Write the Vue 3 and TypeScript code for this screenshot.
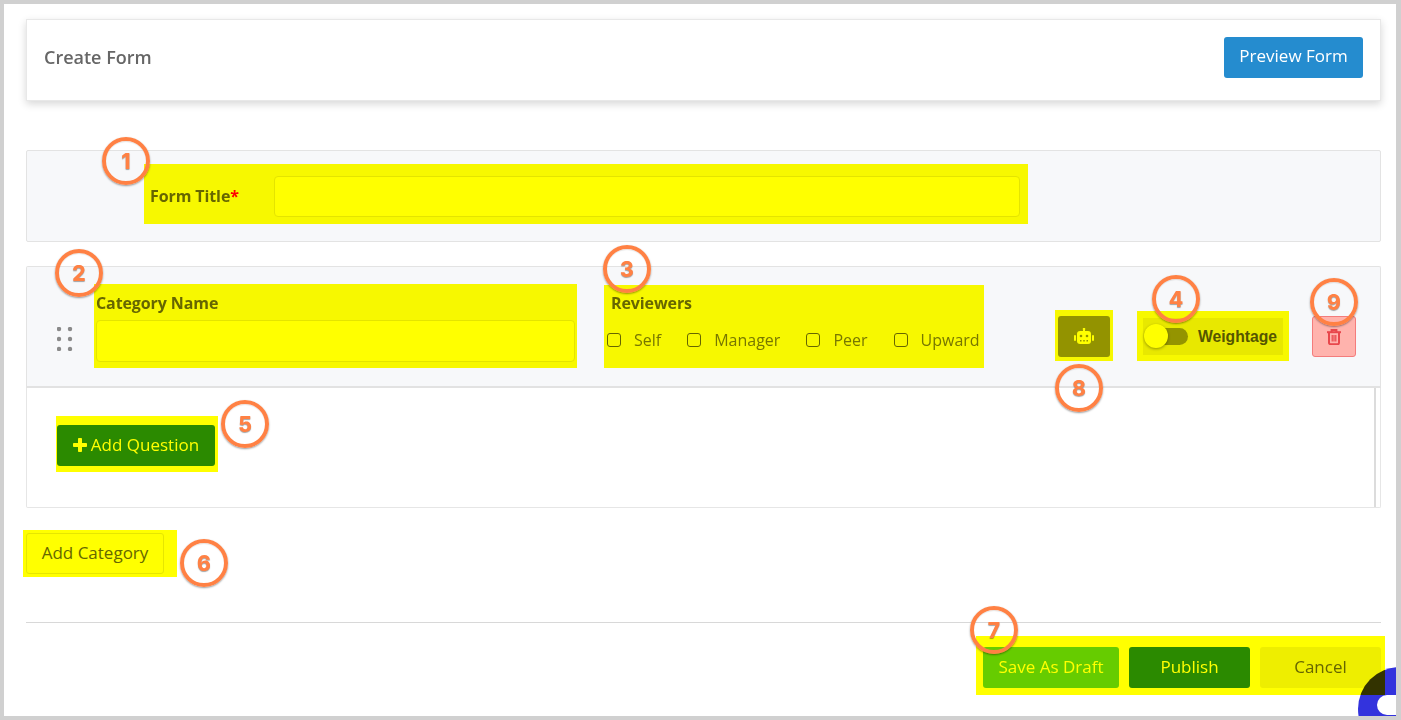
<script setup lang="ts">
interface Marker { n: number; x: number; y: number }
const markers: Marker[] = [
  { n: 1, x: 126, y: 161 },
  { n: 2, x: 79, y: 273 },
  { n: 3, x: 627, y: 269 },
  { n: 4, x: 1176, y: 299 },
  { n: 5, x: 245, y: 424 },
  { n: 6, x: 204, y: 563 },
  { n: 7, x: 994, y: 630 },
  { n: 8, x: 1079, y: 388 },
  { n: 9, x: 1334, y: 302 },
]
const reviewers = ['Self', 'Manager', 'Peer', 'Upward']
</script>

<template>
  <div class="frame">
    <header class="top-card">
      <h1>Create Form</h1>
      <button class="btn preview">Preview Form</button>
    </header>

    <section class="title-card">
      <div class="hl hl-title">
        <label class="title-label">Form Title<span class="req">*</span></label>
        <input class="field title-input" type="text" />
      </div>
    </section>

    <section class="cat-head">
      <svg class="grip" width="16" height="24" viewBox="0 0 16 24">
        <circle v-for="c in [[2,2],[13,2],[2,12],[13,12],[2,22],[13,22]]" :key="c.join()" :cx="c[0]" :cy="c[1]" r="2.2" fill="#8a8a8a" />
      </svg>
      <div class="hl hl-name">
        <label class="lab">Category Name</label>
        <input class="field name-input" type="text" />
      </div>
      <div class="hl hl-rev">
        <label class="lab rev-lab">Reviewers</label>
        <div class="checks">
          <label v-for="r in reviewers" :key="r" class="check"><span class="box"></span>{{ r }}</label>
        </div>
      </div>
      <div class="hl hl-robot">
        <button class="robot">
          <svg width="20" height="18" viewBox="0 0 20 18" fill="#fff">
            <rect x="9" y="0" width="2" height="3" />
            <circle cx="10" cy="1" r="1.3" />
            <rect x="3" y="3" width="14" height="13" rx="3" />
            <rect x="0" y="7" width="2" height="6" rx="1" />
            <rect x="18" y="7" width="2" height="6" rx="1" />
            <circle cx="7" cy="8" r="1.3" fill="#939393" />
            <circle cx="13" cy="8" r="1.3" fill="#939393" />
            <rect x="6" y="12" width="1.500" height="1.500" fill="#939393" />
            <rect x="9.250" y="12" width="1.500" height="1.500" fill="#939393" />
            <rect x="12.500" y="12" width="1.500" height="1.500" fill="#939393" />
          </svg>
        </button>
      </div>
      <div class="hl hl-weight">
        <div class="weight">
          <span class="track"><span class="knob"></span></span>
          <span class="weight-text">Weightage</span>
        </div>
      </div>
      <button class="trash">
        <svg width="14" height="16" viewBox="0 0 14 16" fill="none" stroke="#e8474c" stroke-width="2">
          <path d="M0 3.200h14" />
          <path d="M4.600 3V1h4.800v2" />
          <path d="M2 3.200v10.600a1.400 1.400 0 0 0 1.400 1.400h7.200a1.400 1.400 0 0 0 1.400-1.400V3.200" />
          <path d="M5.200 6v6.500M7 6v6.500M8.800 6v6.500" stroke-width="1.200" />
        </svg>
      </button>
    </section>

    <section class="cat-body">
      <div class="hl hl-add">
        <button class="btn add-q">
          <svg width="14" height="14" viewBox="0 0 14 14" fill="#fff"><path d="M5 .8C5 .4 5.400 0 5.800 0h2.400c.4 0 .8.4.8.8V5h4.200c.4 0 .8.4.8.8v2.400c0 .4-.4.8-.8.8H9v4.200c0 .4-.4.8-.8.8H5.800c-.4 0-.8-.4-.8-.8V9H.8C.4 9 0 8.600 0 8.200V5.800C0 5.400.4 5 .8 5H5z" /></svg>
          Add Question
        </button>
      </div>
    </section>

    <div class="add-cat-row">
      <div class="hl hl-cat"><button class="btn add-cat">Add Category</button></div>
    </div>

    <hr class="rule" />

    <footer class="foot">
      <div class="hl-foot">
        <button class="btn draft">Save As Draft</button>
        <button class="btn publish">Publish</button>
        <button class="btn cancel">Cancel</button>
      </div>
    </footer>

    <div class="widget"><span class="pill"></span></div>
    <div class="foot-hl"></div>

    <span
      v-for="m in markers"
      :key="m.n"
      class="marker"
      :style="{ left: m.x - 4 + 'px', top: m.y - 4 + 'px' }"
    >{{ m.n }}</span>
  </div>
</template>

<style>
html, body { margin: 0; background: #fff; }
</style>

<style scoped>
.frame {
  position: relative;
  box-sizing: border-box;
  width: 1401px;
  height: 720px;
  overflow: hidden;
  background: #fff;
  border: 4px solid #d0d0d0;
  border-right-width: 5px;
  padding: 15px 15px 0 22px;
  font-family: "Open Sans", "Noto Sans", sans-serif;
  color: #666;
}
.hl { position: relative; }
.hl::after, .foot-hl {
  content: "";
  position: absolute;
  background: #ffff00;
  mix-blend-mode: multiply;
  pointer-events: none;
}
.foot-hl { left: 972px; top: 632px; width: 409px; height: 59px; }
.top-card {
  box-sizing: border-box;
  height: 82px;
  background: #fff;
  border: 1px solid #e8e8e8;
  box-shadow: 0 3px 8px rgba(0, 0, 0, .16);
  display: flex;
  align-items: center;
  justify-content: space-between;
  padding: 0 17px 6px 17px;
}
h1 { margin: 0 0 1px; font-size: 18px; font-weight: 600; color: #666; line-height: 24px; }
.btn {
  box-sizing: border-box;
  height: 41px;
  border: 0;
  border-radius: 3px;
  font: 400 17px/22px "Open Sans", "Noto Sans", sans-serif;
  color: #fff;
  padding: 0 0 2px;
}
.preview { width: 139px; background: #258ccf; }
.title-card {
  box-sizing: border-box;
  height: 92px;
  margin-top: 49px;
  background: #f7f8fa;
  border: 1px solid #e3e3e3;
  border-radius: 2px;
  padding: 25px 0 0 123px;
}
.hl-title { display: flex; align-items: center; width: 870px; }
.hl-title::after { inset: -12px -8px -7px -6px; }
.title-label { width: 124px; font-size: 16px; font-weight: 700; color: #666; padding-bottom: 1px; letter-spacing: -.1px; }
.req { color: #ff0000; }
.field {
  box-sizing: border-box;
  display: block;
  height: 41px;
  background: #fff;
  border: 1px solid #e4e4e4;
  border-radius: 4px;
  padding: 0 10px;
  outline: none;
}
.title-input { width: 746px; }
.cat-head {
  box-sizing: border-box;
  height: 122px;
  margin-top: 24px;
  background: #f7f8fa;
  border: 1px solid #e3e3e3;
  border-bottom: 2px solid #e2e2e2;
  border-radius: 2px 2px 0 0;
  display: flex;
  align-items: flex-start;
  position: relative;
}
.grip { margin: 60px 0 0 30px; flex: none; }
.hl-name { width: 479px; margin: 26px 0 0 23px; }
.hl-name::after { inset: -9px -2px -6px -2px; }
.lab { display: block; font-size: 16px; font-weight: 700; line-height: 20px; color: #666; letter-spacing: -.1px; }
.name-input { width: 479px; height: 42px; margin-top: 7px; }
.hl-rev { margin: 26px 0 0 32px; width: 374px; }
.hl-rev::after { inset: -8px -3px -15px -3px; }
.rev-lab { padding-left: 4px; }
.checks { display: flex; margin-top: 13px; height: 27px; align-items: center; }
.check { display: flex; align-items: center; font-size: 16px; color: #777; margin-right: 26px; white-space: nowrap; }
.check:last-child { margin-right: 0; }
.box {
  box-sizing: border-box;
  width: 14px;
  height: 14px;
  border: 1.500px solid #666;
  border-radius: 3px;
  margin-right: 13px;
}
.hl-robot { margin: 49px 0 0 77px; }
.hl-robot::after { inset: -6px -3px -4px -3px; }
.robot {
  box-sizing: border-box;
  width: 52px;
  height: 41px;
  display: flex;
  align-items: center;
  justify-content: center;
  background: #939393;
  border: 0;
  border-radius: 3px;
}
.hl-weight { margin: 51px 0 0 33px; }
.hl-weight::after { inset: -7px -6px -6px -6px; }
.weight {
  box-sizing: border-box;
  display: flex;
  align-items: center;
  width: 140px;
  height: 37px;
  background: #e8e8e8;
  padding-left: 3px;
}
.track {
  position: relative;
  display: block;
  width: 42px;
  height: 17px;
  border-radius: 9px;
  background: #949494;
}
.knob {
  position: absolute;
  left: -2px;
  top: -4px;
  width: 24px;
  height: 24px;
  border-radius: 50%;
  background: #fff;
  box-shadow: 0 1px 3px rgba(0, 0, 0, .35);
}
.weight-text {
  margin-left: 10px;
  font: 700 15.700px "Liberation Sans", Arial, sans-serif;
  color: #555;
}
.trash {
  box-sizing: border-box;
  width: 44px;
  height: 41px;
  margin: 49px 0 0 29px;
  background: #ffb3ad;
  border: 1px solid #f47c7c;
  border-radius: 3px;
  display: flex;
  align-items: center;
  justify-content: center;
}
.cat-body {
  box-sizing: border-box;
  height: 120px;
  background: #fff;
  border: 1px solid #e6e6e6;
  border-top: 0;
  border-radius: 0 0 2px 2px;
  padding: 37px 0 0 30px;
  position: relative;
}
.cat-body::before {
  content: "";
  position: absolute;
  right: 4px;
  top: 0;
  bottom: 0;
  width: 2px;
  background: #dcdcdc;
}
.hl-add { width: 158px; }
.hl-add::after { inset: -9px -3px -6px -1px; }
.add-q {
  width: 158px;
  background: #2b8a00;
  display: flex;
  align-items: center;
  justify-content: center;
  gap: 4px;
}
.add-cat-row { margin-top: 25px; }
.hl-cat { width: 138px; }
.hl-cat::after { inset: -3px -13px -3px -3px; }
.add-cat { width: 138px; background: #fff; border: 1px solid #e6e6e6; color: #666; }
.rule {
  margin: 48px 0 0;
  border: 0;
  border-top: 1px solid #d8d8d8;
}
.foot { display: flex; justify-content: flex-end; margin-top: 24px; }
.hl-foot { display: flex; gap: 10px; }
.draft { width: 136px; background: #66cc00; }
.publish { width: 121px; background: #2b8a00; }
.cancel { width: 121px; background: #eee; color: #666; }
.widget {
  position: absolute;
  right: -46px;
  bottom: -35px;
  width: 84px;
  height: 84px;
  border-radius: 50%;
  background: #3333dd;
}
.pill {
  position: absolute;
  left: 19px;
  top: 28px;
  width: 50px;
  height: 20px;
  border-radius: 10px;
  background: #fff;
}
.marker {
  position: absolute;
  box-sizing: border-box;
  width: 48px;
  height: 48px;
  margin: -24px 0 0 -24px;
  border: 4px solid #ff8144;
  border-radius: 50%;
  display: flex;
  align-items: center;
  justify-content: center;
  font: 800 21px Inter, "Noto Sans", sans-serif;
  color: #ff8144;
  text-shadow: 0 1px 1px rgba(0, 0, 0, .35);
  box-shadow: 0 1px 2px rgba(0, 0, 0, .4), inset 0 1px 1px rgba(0, 0, 0, .1);
}
</style>
